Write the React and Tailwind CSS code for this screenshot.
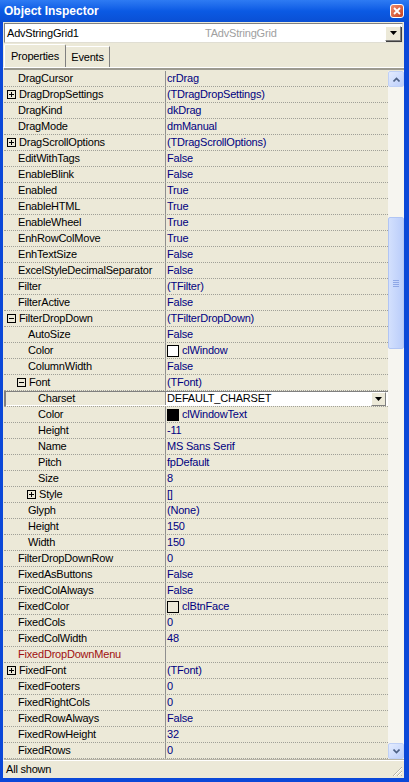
import React from "react";

const NAME_PAD = ["pl-[14px]", "pl-[24px]", "pl-[34px]"];
const BOX_PAD = ["pl-[3px]", "pl-[13px]", "pl-[23px]"];

const rows = [
  { n: "DragCursor", v: "crDrag" },
  { n: "DragDropSettings", v: "(TDragDropSettings)", box: "+" },
  { n: "DragKind", v: "dkDrag" },
  { n: "DragMode", v: "dmManual" },
  { n: "DragScrollOptions", v: "(TDragScrollOptions)", box: "+" },
  { n: "EditWithTags", v: "False" },
  { n: "EnableBlink", v: "False" },
  { n: "Enabled", v: "True" },
  { n: "EnableHTML", v: "True" },
  { n: "EnableWheel", v: "True" },
  { n: "EnhRowColMove", v: "True" },
  { n: "EnhTextSize", v: "False" },
  { n: "ExcelStyleDecimalSeparator", v: "False" },
  { n: "Filter", v: "(TFilter)" },
  { n: "FilterActive", v: "False" },
  { n: "FilterDropDown", v: "(TFilterDropDown)", box: "-" },
  { n: "AutoSize", v: "False", l: 1 },
  { n: "Color", v: "clWindow", l: 1, sw: "bg-white" },
  { n: "ColumnWidth", v: "False", l: 1 },
  { n: "Font", v: "(TFont)", l: 1, box: "-" },
  { n: "Charset", v: "DEFAULT_CHARSET", l: 2, sel: true },
  { n: "Color", v: "clWindowText", l: 2, sw: "bg-black" },
  { n: "Height", v: "-11", l: 2 },
  { n: "Name", v: "MS Sans Serif", l: 2 },
  { n: "Pitch", v: "fpDefault", l: 2 },
  { n: "Size", v: "8", l: 2 },
  { n: "Style", v: "[]", l: 2, box: "+" },
  { n: "Glyph", v: "(None)", l: 1 },
  { n: "Height", v: "150", l: 1 },
  { n: "Width", v: "150", l: 1 },
  { n: "FilterDropDownRow", v: "0" },
  { n: "FixedAsButtons", v: "False" },
  { n: "FixedColAlways", v: "False" },
  { n: "FixedColor", v: "clBtnFace", sw: "bg-[#ece9d8]" },
  { n: "FixedCols", v: "0" },
  { n: "FixedColWidth", v: "48" },
  { n: "FixedDropDownMenu", v: "", red: true },
  { n: "FixedFont", v: "(TFont)", box: "+" },
  { n: "FixedFooters", v: "0" },
  { n: "FixedRightCols", v: "0" },
  { n: "FixedRowAlways", v: "False" },
  { n: "FixedRowHeight", v: "32" },
  { n: "FixedRows", v: "0" },
];

const Box = ({ minus }) => (
  <svg width="9" height="9" className="shrink-0 mr-[3px]">
    <rect x="0.5" y="0.5" width="8" height="8" fill="none" stroke="#000" />
    <path d="M2 4.5h5" stroke="#000" />
    {!minus && <path d="M4.5 2v5" stroke="#000" />}
  </svg>
);

const DownTri = () => (
  <svg width="7" height="4">
    <path d="M0 0h7L3.5 4z" fill="#000" />
  </svg>
);

const Row = ({ r }) => {
  const lvl = r.l || 0;
  return (
    <div className="h-[16px] flex border-b border-dotted border-[#a0a098]">
      <div
        className={`w-[162px] shrink-0 flex items-center ${r.box ? BOX_PAD[lvl] : NAME_PAD[lvl]} ${
          r.sel ? "shadow-[inset_2px_1px_0_#808080,inset_0_-1px_0_#ffffff]" : ""
        } ${r.red ? "text-[#a01010]" : "text-black"}`}
      >
        {r.box && <Box minus={r.box === "-"} />}
        <span>{r.n}</span>
      </div>
      {r.sel ? (
        <div className="flex-1 flex items-center bg-white text-black pl-[1px] shadow-[inset_0_1px_0_#808080]">
          <span className="flex-1">{r.v}</span>
          <div className="w-[15px] h-[14px] mr-[2px] bg-[#ece9d8] border-t border-l border-white border-r border-b border-r-[#808080] border-b-[#808080] flex items-center justify-center">
            <DownTri />
          </div>
        </div>
      ) : (
        <div className="flex-1 flex items-center pl-[1px] text-[#000080]">
          {r.sw && <span className={`w-[12px] h-[12px] border border-black mr-[3px] ${r.sw}`} />}
          <span>{r.v}</span>
        </div>
      )}
    </div>
  );
};

const ScrollBtn = ({ up }) => (
  <div className="h-[16px] w-[16px] rounded-[2px] border border-[#bfd0f6] bg-gradient-to-br from-[#e4ecfe] to-[#bccefa] flex items-center justify-center">
    <svg width="7" height="5">
      <path
        d={up ? "M0.5 4.5L3.5 1.5L6.5 4.5" : "M0.5 0.5L3.5 3.5L6.5 0.5"}
        fill="none"
        stroke="#4d6185"
        strokeWidth="1.6"
      />
    </svg>
  </div>
);

export default function App() {
  return (
    <div className="w-[409px] h-[782px] flex flex-col overflow-hidden font-['Liberation_Sans',Arial,sans-serif] text-[11px] tracking-[-0.2px] leading-none">
      {/* title bar */}
      <div className="h-[22px] shrink-0 flex items-center bg-gradient-to-b from-[#2e7bf3] via-[#0b5ae4] to-[#0a4fd4] pl-[4px] pr-[5px]">
        <span className="flex-1 text-white font-bold text-[12px] tracking-normal">Object Inspector</span>
        <div className="w-[14px] h-[14px] rounded-[3px] border border-white bg-gradient-to-br from-[#ef8a6a] to-[#c9401c] flex items-center justify-center">
          <svg width="8" height="8">
            <path d="M1 1L7 7M7 1L1 7" stroke="#fff" strokeWidth="1.8" />
          </svg>
        </div>
      </div>

      <div className="flex-1 flex flex-col bg-[#ece9d8] border-l-[3px] border-r-[5px] border-b-[4px] border-[#0b48d8]">
        {/* component combo */}
        <div className="mt-[1px] mx-[1px] h-[20px] shrink-0 flex items-center bg-white border-t border-l border-[#808080] border-r border-b border-r-[#e0ded3] border-b-[#e0ded3]">
          <span className="pl-[2px] w-[200px] text-black">AdvStringGrid1</span>
          <span className="flex-1 text-[#a0a0a0]">TAdvStringGrid</span>
          <div className="w-[16px] h-[15px] mr-[1px] bg-[#ece9d8] border-t border-l border-white border-r border-b border-r-[#808080] border-b-[#808080] shadow-[1px_1px_0_#404040] flex items-center justify-center">
            <DownTri />
          </div>
        </div>

        {/* tabs */}
        <div className="h-[25px] shrink-0 flex items-end pl-[1px] border-b border-white">
          <div className="h-[23px] w-[62px] flex items-center justify-center border-t border-l border-white border-r border-r-[#808080] rounded-t-[2px] text-black">
            Properties
          </div>
          <div className="h-[21px] w-[44px] flex items-center justify-center border-t border-white border-r border-r-[#808080] text-black">
            Events
          </div>
        </div>

        {/* grid */}
        <div className="h-[692px] shrink-0 flex ml-[1px] pt-[1px] border-t-[2px] border-t-[#9c9a90] border-b border-b-[#b8b5a6]">
          <div className="flex-1 flex flex-col bg-[linear-gradient(to_right,transparent_161px,#8f8f8f_161px,#8f8f8f_162px,transparent_162px)]">
            {rows.map((r, i) => (
              <Row key={i} r={r} />
            ))}
          </div>
          <div className="w-[16px] shrink-0 flex flex-col bg-[#f6f5f0]">
            <ScrollBtn up />
            <div className="flex-1 flex flex-col pt-[130px]">
              <div className="h-[132px] w-[16px] rounded-[2px] border border-[#b1c5f4] bg-gradient-to-r from-[#d3e0fd] to-[#bacdfa] flex flex-col items-center justify-center gap-[1px]">
                <span className="w-[6px] h-[1px] bg-[#8ea7e6]" />
                <span className="w-[6px] h-[1px] bg-[#8ea7e6]" />
                <span className="w-[6px] h-[1px] bg-[#8ea7e6]" />
                <span className="w-[6px] h-[1px] bg-[#8ea7e6]" />
              </div>
            </div>
            <ScrollBtn />
          </div>
        </div>

        {/* status bar */}
        <div className="flex-1 flex items-center pl-[3px] pr-[1px] border-t border-white">
          <span className="flex-1 text-black">All shown</span>
          <svg width="11" height="11" className="self-end mb-[1px]">
            <path d="M10 1L1 10M10 5L5 10M10 9L9 10" stroke="#b7b4a8" strokeWidth="1" />
            <path d="M10 2L2 10M10 6L6 10" stroke="#fff" strokeWidth="1" />
          </svg>
        </div>
      </div>
    </div>
  );
}
